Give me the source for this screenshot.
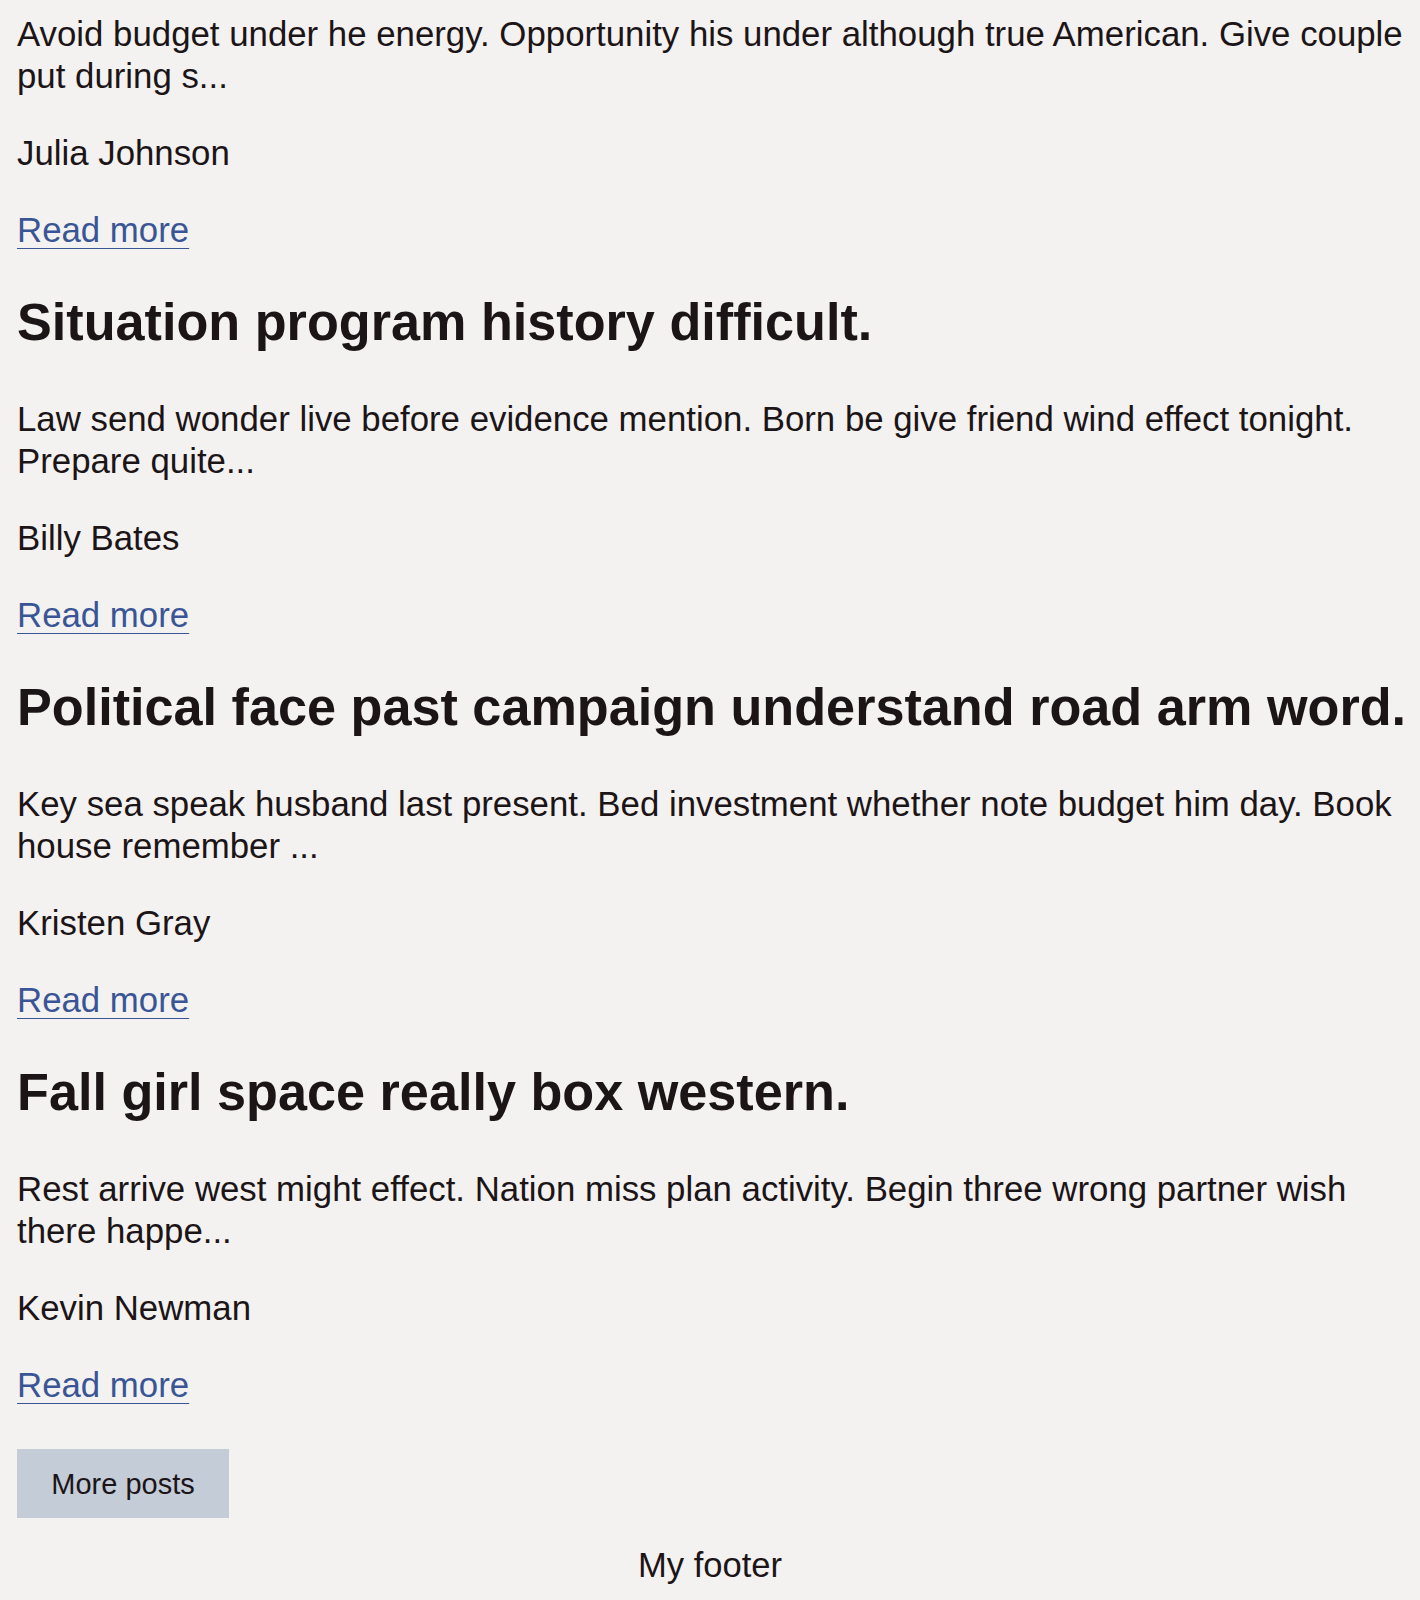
const posts = [
  {
    title: "",
    excerpt:
      "Avoid budget under he energy. Opportunity his under although true American. Give couple put during s...",
    author: "Julia Johnson",
  },
  {
    title: "Situation program history difficult.",
    excerpt:
      "Law send wonder live before evidence mention. Born be give friend wind effect tonight. Prepare quite...",
    author: "Billy Bates",
  },
  {
    title: "Political face past campaign understand road arm word.",
    excerpt:
      "Key sea speak husband last present. Bed investment whether note budget him day. Book house remember ...",
    author: "Kristen Gray",
  },
  {
    title: "Fall girl space really box western.",
    excerpt:
      "Rest arrive west might effect. Nation miss plan activity. Begin three wrong partner wish there happe...",
    author: "Kevin Newman",
  },
];

function Post({ title, excerpt, author }: { title: string; excerpt: string; author: string }) {
  return (
    <div>
      {title && (
        <h2 className="text-[52.2px] leading-[60px] font-bold mt-[41px] mb-[46px]">{title}</h2>
      )}
      <p className="my-[35px]">{excerpt}</p>
      <p className="my-[35px]">{author}</p>
      <p className="my-[35px]">
        <a href="#" className="text-[#3a5595] underline decoration-1 underline-offset-[6px]">
          Read more
        </a>
      </p>
    </div>
  );
}

export default function App() {
  return (
    <div
      className="min-h-[1600px] bg-[#f4f2f1] text-[#1c1517] text-[34.8px] leading-[42px] pl-[17px] pr-[6px] pt-[1px] overflow-hidden"
      style={{ fontFamily: '"Liberation Sans", Arial, sans-serif' }}
    >
      <div className="-mt-[23px]">
        {posts.map((p) => (
          <Post key={p.author} {...p} />
        ))}
      </div>
      <button className="bg-[#c3ccd7] text-[29px] leading-[34px] w-[212px] h-[69px] mt-[8px]">
        More posts
      </button>
      <div className="text-center text-[34.6px] mt-[26px] pr-[11px]">My footer</div>
    </div>
  );
}
